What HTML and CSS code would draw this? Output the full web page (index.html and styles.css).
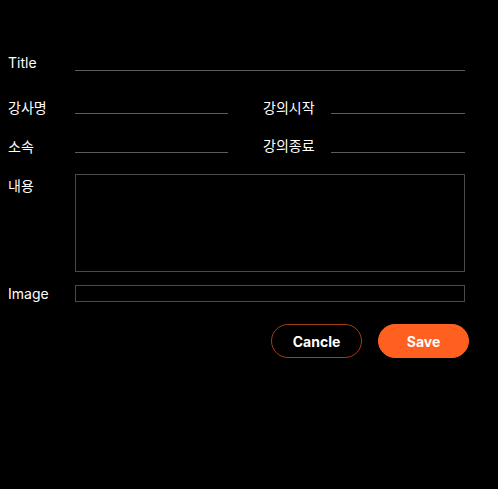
FILE: index.html
```html
<!DOCTYPE html>
<html lang="ko">
<head>
<meta charset="utf-8">
<link rel="stylesheet" href="styles.css">
</head>
<body>
<form class="form">
  <div class="row row-title">
    <label class="label">Title</label>
    <input class="line span-all" type="text">
  </div>
  <div class="row row-a">
    <label class="label">강사명</label>
    <input class="line" type="text">
    <span></span>
    <label class="label">강의시작</label>
    <input class="line" type="text">
  </div>
  <div class="row row-b">
    <label class="label">소속</label>
    <input class="line" type="text">
    <span></span>
    <label class="label label-up">강의종료</label>
    <input class="line" type="text">
  </div>
  <div class="row row-text">
    <label class="label label-top">내용</label>
    <textarea class="box span-all"></textarea>
  </div>
  <div class="row row-image">
    <label class="label label-mid">Image</label>
    <input class="box image-box span-all" type="text">
  </div>
  <div class="actions">
    <button type="button" class="btn btn-cancel">Cancle</button>
    <button type="button" class="btn btn-save">Save</button>
  </div>
</form>
</body>
</html>
```
FILE: styles.css
```css
html, body {
  margin: 0;
  background: #000;
  color: #fff;
  font-family: Inter, "Noto Sans CJK KR", sans-serif;
  font-size: 14px;
}
.form {
  width: 498px;
  height: 489px;
  box-sizing: border-box;
  padding: 51px 8px 0 8px;
}
.row {
  display: grid;
  grid-template-columns: 67px 153px 35px 68px 134px;
  align-items: end;
}
.span-all {
  grid-column: 2 / 6;
}
.label {
  font-size: 14px;
  line-height: 16px;
  margin-bottom: -2px;
  white-space: nowrap;
}
.row-title .label {
  margin-bottom: 0;
}
.label-up {
  margin-bottom: -1px;
}
.label-top {
  align-self: start;
  margin: 0;
  padding-top: 4px;
}
.label-mid {
  align-self: center;
  margin: 0;
  padding-top: 1px;
}
.line {
  display: block;
  box-sizing: border-box;
  width: 100%;
  height: 20px;
  margin: 0;
  padding: 0;
  background: transparent;
  border: 0;
  border-bottom: 1px solid #5c5c5c;
  border-radius: 0;
  outline: none;
}
.row-a { margin-top: 23px; }
.row-b { margin-top: 19px; }
.row-text { margin-top: 21px; align-items: start; }
.row-image { margin-top: 13px; }
.box {
  display: block;
  box-sizing: border-box;
  width: 100%;
  margin: 0;
  padding: 0;
  background: transparent;
  border: 1px solid #4a4a4a;
  border-radius: 0;
  outline: none;
  resize: none;
}
textarea.box { height: 98px; }
.image-box { height: 17px; }
.actions {
  display: flex;
  justify-content: flex-end;
  gap: 16px;
  margin-top: 22px;
  margin-right: 21px;
}
.btn {
  width: 91px;
  height: 34px;
  border-radius: 17px;
  font-family: Inter, sans-serif;
  font-size: 14px;
  font-weight: 700;
  color: #fff;
  cursor: pointer;
}
.btn-cancel {
  background: #000;
  border: 1px solid #a33c17;
}
.btn-save {
  background: #ff5f1f;
  border: 1px solid #ff5f1f;
}
```
